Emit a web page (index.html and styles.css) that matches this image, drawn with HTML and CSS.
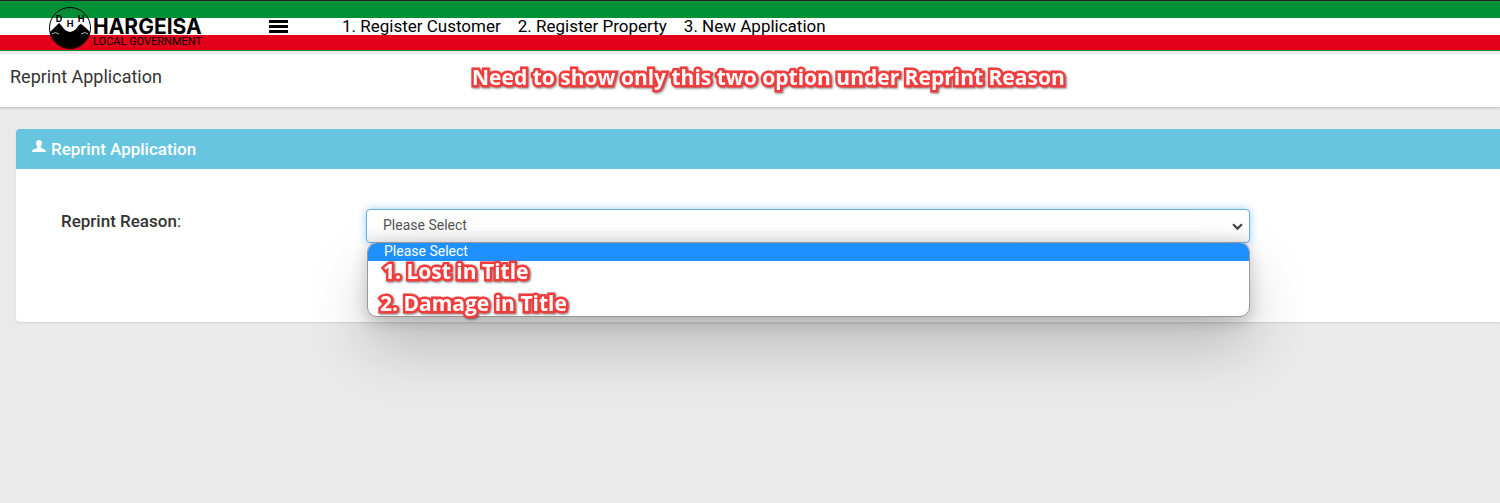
FILE: index.html
```
<!DOCTYPE html>
<html lang="en">
<head>
    <meta charset="UTF-8">
    <meta name="viewport" content="width=device-width, initial-scale=1.0">
    <title>Reprint Application</title>
    <link rel="stylesheet" href="styles.css">
</head>
<body>
    <header class="navbar">
        <a class="brand" href="#">
            <svg class="brand-logo" viewBox="0 0 42 42" aria-hidden="true">
                <circle cx="21" cy="21" r="20.5" fill="none" stroke="#000"/>
                <path d="M1 25 L5 21 L10 16 L12 18 L15 22 Q21 28 27 22 L30 18 L32 17 L37 21 L41 25 A20.500 20.500 0 0 1 1 25Z" fill="#000"/>
                <path d="M3 27 Q6 24 10 27 M32 27 Q36 24 39 27" fill="none" stroke="#ddd" stroke-width="0.800"/>
                <path d="M13 7 Q21 -1 30 7" fill="none" stroke="#555" stroke-width="1.200" stroke-dasharray="1 3"/>
                <text class="brand-letter" x="10" y="15">D</text>
                <text class="brand-letter" x="21" y="20">H</text>
                <text class="brand-letter" x="32" y="15">H</text>
            </svg>
            <span class="brand-text">
                <span class="brand-name">HARGEISA</span>
                <span class="brand-sub">LOCAL GOVERNMENT</span>
            </span>
        </a>
        <button class="menu-toggle" type="button" aria-label="Menu">
            <span></span>
            <span></span>
            <span></span>
        </button>
        <nav class="nav-links">
            <a href="#">1. Register Customer</a>
            <a href="#">2. Register Property</a>
            <a href="#">3. New Application</a>
        </nav>
    </header>

    <div class="page-title">
        <h1>Reprint Application</h1>
        <div class="note note-title">Need to show only this two option under Reprint Reason</div>
    </div>

    <main class="card">
        <div class="card-header">
            <svg class="user-icon" viewBox="0 0 14 12" aria-hidden="true">
                <path d="M7 0C5 0 4 1.300 4 3.200C4 5 5 5.800 5.400 7C5.400 8 4.500 8.200 3 8.800C1 9.600 0 10 0 12H14C14 10 13 9.600 11 8.800C9.500 8.200 8.600 8 8.600 7C9 5.800 10 5 10 3.200C10 1.300 9 0 7 0Z" fill="#fff"/>
            </svg>
            <h2>Reprint Application</h2>
        </div>
        <form class="card-body">
            <label for="reason"><b>Reprint Reason</b>:</label>
            <div class="select-wrap">
                <select id="reason">
                    <option>Please Select</option>
                </select>
                <svg class="caret" viewBox="0 0 10 7" aria-hidden="true">
                    <path d="M1 1L5 5L9 1" fill="none" stroke="#444" stroke-width="2"/>
                </svg>
                <!-- open list -->
                <ul class="options">
                    <li class="option active">Please Select</li>
                    <li class="note note-lost">1. Lost in Title</li>
                    <li class="note note-damage">2. Damage in Title</li>
                </ul>
            </div>
        </form>
    </main>
</body>
</html>
```
FILE: styles.css
```
* {
    box-sizing: border-box;
}
body {
    margin: 0;
    min-height: 100vh;
    font-family: Roboto, sans-serif;
    color: #333;
    background-color: #eaeaea;
}
.navbar {
    display: flex;
    align-items: center;
    height: 51px;
    padding-left: 49px;
    border-top: 1px solid #222;
    border-bottom: 1px solid #009036;
    background: linear-gradient(#009036 17px, #fff 17px, #fff 34px, #e3001b 34px);
}
.brand {
    display: flex;
    align-items: center;
    width: 220px;
    padding-top: 4px;
    color: #000;
    text-decoration: none;
}
.brand-logo {
    width: 42px;
    height: 42px;
}
.brand-letter {
    font: bold 9px Inter, sans-serif;
    text-anchor: middle;
}
.brand-text {
    display: flex;
    flex-direction: column;
    margin: 10px 0 0 2px;
}
.brand-name {
    font: bold 21px/18px Inter, sans-serif;
}
.brand-sub {
    font: 11px/12px Roboto, sans-serif;
}
.menu-toggle {
    display: flex;
    flex-direction: column;
    gap: 2px;
    width: 19px;
    margin-top: 2px;
    padding: 0;
    border: 0;
    background: none;
}
.menu-toggle span {
    height: 3px;
    background-color: #000;
}
.nav-links {
    display: flex;
    gap: 17px;
    margin: 1px 0 0 54px;
    font-size: 17px;
    line-height: 20px;
}
.nav-links a {
    color: #000;
    text-decoration: none;
}
.page-title {
    position: relative;
    margin-top: 3px;
    padding: 12px 10px 19px;
    background-color: #fff;
    border-bottom: 1px solid #ccc;
    box-shadow: 0 1px 2px rgba(0,0,0,0.1);
}
h1 {
    margin: 0;
    font-size: 18px;
    font-weight: 400;
    line-height: 22px;
}
.note {
    position: absolute;
    font: bold 21px/24px "Open Sans", sans-serif;
    color: #fff;
    white-space: nowrap;
    -webkit-text-stroke: 5px #f23c3c;
    stroke-linejoin: round;
    paint-order: stroke fill;
    filter: drop-shadow(1px 1px 1px rgba(0,0,0,0.5));
}
.note-title {
    top: 11px;
    left: 472px;
}
.card {
    margin: 21px 0 0 16px;
    background-color: #fff;
    border-radius: 4px 0 0 4px;
    box-shadow: 0 1px 2px rgba(0,0,0,0.1);
}
.card-header {
    display: flex;
    align-items: center;
    gap: 5px;
    height: 40px;
    padding-left: 16px;
    color: #fff;
    background-color: #67c5df;
    border-radius: 4px 0 0 0;
}
.user-icon {
    width: 14px;
    height: 12px;
    margin-bottom: 6px;
}
h2 {
    margin: 0;
    font-size: 17px;
    font-weight: 500;
}
.card-body {
    display: flex;
    padding: 40px 250px 79px 45px;
}
label {
    flex: 0 0 305px;
    font-size: 17px;
    line-height: 24px;
}
label b {
    font-weight: 500;
}
.select-wrap {
    position: relative;
    flex: 1;
}
select {
    display: block;
    width: 100%;
    height: 34px;
    padding: 0 16px 2px;
    font: 14px Roboto, sans-serif;
    color: #555;
    border: 1px solid #66afe9;
    border-radius: 4px;
    background: linear-gradient(#fff 50%, #f2f2f2);
    box-shadow: 0 0 8px rgba(102,175,233,0.6);
    appearance: none;
}
.caret {
    position: absolute;
    top: 14px;
    right: 7px;
    width: 11px;
    height: 8px;
}
.options {
    position: absolute;
    top: 33px;
    left: 1px;
    right: 0;
    height: 75px;
    margin: 0;
    padding: 0;
    list-style: none;
    background-color: #fff;
    border: 1px solid #999;
    border-radius: 10px;
    box-shadow: 0 30px 60px rgba(0,0,0,0.2), 0 4px 16px rgba(0,0,0,0.2);
}
.option {
    height: 18px;
    padding-left: 16px;
    font-size: 14px;
    line-height: 16px;
}
.active {
    color: #fff;
    background-color: #1e90ff;
    border-radius: 9px 9px 0 0;
}
.note-lost {
    top: 16px;
    left: 15px;
}
.note-damage {
    top: 48px;
    left: 12px;
}
```
